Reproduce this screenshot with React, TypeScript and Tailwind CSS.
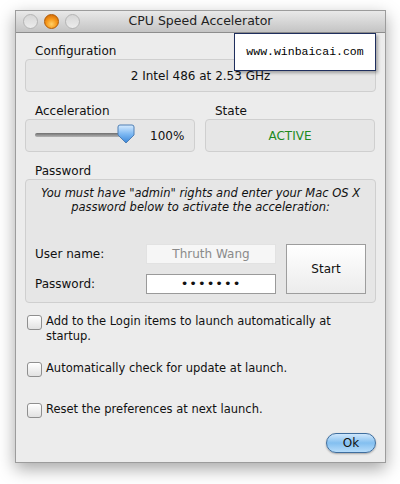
const font = { fontFamily: '"Lucida Grande", "DejaVu Sans", sans-serif' }

const Checkbox = () => (
  <span className="mt-[1px] block h-[15px] w-[15px] shrink-0 rounded-[3px] border border-[#8f8f8f] bg-gradient-to-b from-white to-[#e2e2e2] shadow-[inset_0_1px_0_#fff]" />
)

const Light = ({ active }: { active?: boolean }) => (
  <span
    className={
      active
        ? 'block h-[15px] w-[15px] rounded-full border border-[#b35a00] bg-[radial-gradient(circle_at_50%_70%,#ffd066_0%,#f79a1c_45%,#c85d00_100%)]'
        : 'block h-[15px] w-[15px] rounded-full border border-[#b4b4b4] bg-gradient-to-b from-[#d6d6d6] to-[#ececec]'
    }
  />
)

const App = () => {
  return (
    <div className="relative h-[484px] w-[400px] overflow-hidden bg-white pl-[15px] pt-[10px] text-[#111]" style={font}>
      <div className="flex h-[453px] w-[371px] flex-col border border-[#9c9c9c] bg-[#ececec] shadow-[0_6px_16px_rgba(0,0,0,0.35)]">
        {/* title bar */}
        <div className="relative flex h-[22px] shrink-0 items-center border-b border-[#8d8d8d] bg-gradient-to-b from-[#e9e9e9] to-[#c4c4c4]">
          <div className="absolute left-[7px] top-[3px] flex gap-[6px]">
            <Light />
            <Light active />
            <Light />
          </div>
          <div className="w-full text-center text-[12.5px] text-[#222]">CPU Speed Accelerator</div>
        </div>

        <div className="flex flex-1 flex-col px-[9px] text-[11.5px]">
          <div className="ml-[10px] mt-[10px] h-[16px] text-[12px] leading-[16px]">Configuration</div>
          <div className="flex h-[33px] items-center justify-center rounded-[4px] border border-[#cfcfcf] bg-[#e6e6e6] text-[12px]">
            2 Intel 486 at 2.53 GHz
          </div>

          <div className="mt-[12px] flex gap-[10px] text-[12px]">
            <div className="flex w-[170px] flex-col">
              <div className="ml-[10px] h-[15px] leading-[15px]">Acceleration</div>
              <div className="flex h-[33px] items-center rounded-[4px] border border-[#cfcfcf] bg-[#e6e6e6] pl-[9px]">
                <div className="relative h-[18px] w-[100px]">
                  <div className="absolute left-0 right-[8px] top-[6px] h-[4px] rounded-full bg-gradient-to-b from-[#6f6f6f] to-[#b5b5b5]" />
                  <svg className="absolute left-[82px] top-[-3px]" width="18" height="20" viewBox="0 0 18 20">
                    <defs>
                      <linearGradient id="thumb" x1="0" y1="0" x2="0" y2="1">
                        <stop offset="0" stopColor="#d8ecff" />
                        <stop offset="0.5" stopColor="#7db8f2" />
                        <stop offset="1" stopColor="#3a86d8" />
                      </linearGradient>
                    </defs>
                    <path d="M3 1 H15 Q17 1 17 3 V11 L9 19 L1 11 V3 Q1 1 3 1 Z" fill="url(#thumb)" stroke="#4f7fb4" strokeWidth="1" />
                  </svg>
                </div>
                <span className="ml-[15px]">100%</span>
              </div>
            </div>
            <div className="flex w-[170px] flex-col">
              <div className="ml-[10px] h-[15px] leading-[15px]">State</div>
              <div className="flex h-[33px] items-center justify-center rounded-[4px] border border-[#cfcfcf] bg-[#e6e6e6] text-[#1e8a1e]">
                ACTIVE
              </div>
            </div>
          </div>

          <div className="ml-[10px] mt-[12px] h-[15px] text-[12px] leading-[15px]">Password</div>
          <div className="flex h-[124px] flex-col rounded-[4px] border border-[#cfcfcf] bg-[#e6e6e6] px-[4px] pt-[6px]">
            <div className="text-center italic leading-[14px]">
              You must have "admin" rights and enter your Mac OS X password below to activate the acceleration:
            </div>
            <div className="mt-[30px] flex px-[4px] text-[12px]">
              <div className="flex flex-col gap-[10px] pl-[1px]">
                <div className="flex items-center">
                  <span className="w-[111px]">User name:</span>
                  <div className="flex h-[20px] w-[130px] items-center justify-center border border-[#e2e2e2] bg-[#f6f6f6] text-[#8a8a8a]">
                    Thruth Wang
                  </div>
                </div>
                <div className="flex items-center">
                  <span className="w-[111px]">Password:</span>
                  <div className="flex h-[20px] w-[130px] items-center justify-center border border-[#9a9a9a] bg-white text-[13px] tracking-[1px]">
                    •••••••
                  </div>
                </div>
              </div>
              <button className="ml-[10px] flex h-[50px] w-[80px] items-center justify-center border border-[#9d9d9d] bg-gradient-to-b from-white to-[#ececec]">
                Start
              </button>
            </div>
          </div>

          <div className="mt-[11px] flex gap-[4px] pl-[2px] leading-[15px]">
            <Checkbox />
            <span>Add to the Login items to launch automatically at startup.</span>
          </div>
          <div className="mt-[17px] flex gap-[4px] pl-[2px] leading-[15px]">
            <Checkbox />
            <span>Automatically check for update at launch.</span>
          </div>
          <div className="mt-[25px] flex gap-[4px] pl-[2px] leading-[15px]">
            <Checkbox />
            <span>Reset the preferences at next launch.</span>
          </div>

          <div className="mt-[15px] flex justify-end">
            <button className="flex h-[20px] w-[50px] items-center justify-center rounded-full border border-[#3f6e9e] bg-gradient-to-b from-[#cfe7fb] via-[#83bff0] to-[#b6dcfa] text-[12px] shadow-[0_1px_2px_rgba(0,0,0,0.3)]">
              Ok
            </button>
          </div>
        </div>
      </div>

      {/* watermark */}
      <div className="absolute left-[234px] top-[33px] flex h-[38px] w-[142px] items-center justify-center border border-[#1f2f5e] bg-white text-[11.5px] text-black shadow-[2px_2px_3px_rgba(0,0,0,0.3)]" style={{ fontFamily: '"Liberation Mono", monospace' }}>
        www.winbaicai.com
      </div>
    </div>
  )
}

export default App
